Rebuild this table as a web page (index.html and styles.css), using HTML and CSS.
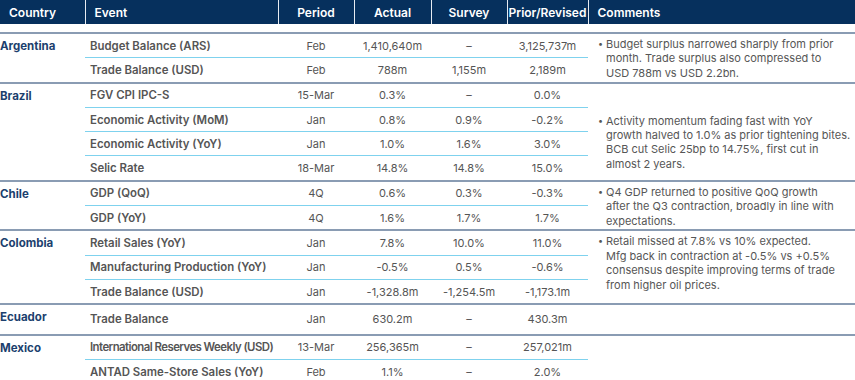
FILE: index.html
```html
<!DOCTYPE html>
<html lang="en">
<head>
<meta charset="utf-8">
<title>LatAm Economic Calendar</title>
<link rel="stylesheet" href="styles.css">
</head>
<body>
<table class="cal">
  <colgroup>
    <col class="c-country">
    <col class="c-event">
    <col class="c-period">
    <col class="c-actual">
    <col class="c-survey">
    <col class="c-prior">
    <col class="c-comments">
  </colgroup>
  <thead>
    <tr>
      <th class="left">Country</th>
      <th class="left">Event</th>
      <th>Period</th>
      <th>Actual</th>
      <th>Survey</th>
      <th>Prior/Revised</th>
      <th class="left">Comments</th>
    </tr>
  </thead>
  <tbody class="spacer"><tr><td colspan="7"></td></tr></tbody>
  <tbody class="grp">
    <tr>
      <td class="country" rowspan="2">Argentina</td>
      <td class="ev">Budget Balance (ARS)</td><td class="num">Feb</td><td class="num">1,410,640m</td><td class="num">–</td><td class="num">3,125,737m</td>
      <td class="cm" rowspan="2"><div class="note"><span class="dot">•</span><span class="txt">Budget surplus narrowed sharply from prior<br>month. Trade surplus also compressed to<br>USD 788m vs USD 2.2bn.</span></div></td>
    </tr>
    <tr>
      <td class="ev">Trade Balance (USD)</td><td class="num">Feb</td><td class="num">788m</td><td class="num">1,155m</td><td class="num">2,189m</td>
    </tr>
  </tbody>
  <tbody class="grp">
    <tr>
      <td class="country" rowspan="4">Brazil</td>
      <td class="ev">FGV CPI IPC-S</td><td class="num">15-Mar</td><td class="num">0.3%</td><td class="num">–</td><td class="num">0.0%</td>
      <td class="cm cm-brazil" rowspan="4"><div class="note"><span class="dot">•</span><span class="txt">Activity momentum fading fast with YoY<br>growth halved to 1.0% as prior tightening bites.<br>BCB cut Selic 25bp to 14.75%, first cut in<br>almost 2 years.</span></div></td>
    </tr>
    <tr>
      <td class="ev">Economic Activity (MoM)</td><td class="num">Jan</td><td class="num">0.8%</td><td class="num">0.9%</td><td class="num">-0.2%</td>
    </tr>
    <tr>
      <td class="ev">Economic Activity (YoY)</td><td class="num">Jan</td><td class="num">1.0%</td><td class="num">1.6%</td><td class="num">3.0%</td>
    </tr>
    <tr>
      <td class="ev">Selic Rate</td><td class="num">18-Mar</td><td class="num">14.8%</td><td class="num">14.8%</td><td class="num">15.0%</td>
    </tr>
  </tbody>
  <tbody class="grp">
    <tr>
      <td class="country" rowspan="2">Chile</td>
      <td class="ev">GDP (QoQ)</td><td class="num">4Q</td><td class="num">0.6%</td><td class="num">0.3%</td><td class="num">-0.3%</td>
      <td class="cm" rowspan="2"><div class="note"><span class="dot">•</span><span class="txt">Q4 GDP returned to positive QoQ growth<br>after the Q3 contraction, broadly in line with<br>expectations.</span></div></td>
    </tr>
    <tr>
      <td class="ev">GDP (YoY)</td><td class="num">4Q</td><td class="num">1.6%</td><td class="num">1.7%</td><td class="num">1.7%</td>
    </tr>
  </tbody>
  <tbody class="grp">
    <tr>
      <td class="country" rowspan="3">Colombia</td>
      <td class="ev">Retail Sales (YoY)</td><td class="num">Jan</td><td class="num">7.8%</td><td class="num">10.0%</td><td class="num">11.0%</td>
      <td class="cm" rowspan="3"><div class="note"><span class="dot">•</span><span class="txt">Retail missed at 7.8% vs 10% expected.<br>Mfg back in contraction at -0.5% vs +0.5%<br>consensus despite improving terms of trade<br>from higher oil prices.</span></div></td>
    </tr>
    <tr>
      <td class="ev">Manufacturing Production (YoY)</td><td class="num">Jan</td><td class="num">-0.5%</td><td class="num">0.5%</td><td class="num">-0.6%</td>
    </tr>
    <tr>
      <td class="ev">Trade Balance (USD)</td><td class="num">Jan</td><td class="num">-1,328.8m</td><td class="num">-1,254.5m</td><td class="num">-1,173.1m</td>
    </tr>
  </tbody>
  <tbody class="grp">
    <tr>
      <td class="country">Ecuador</td>
      <td class="ev">Trade Balance</td><td class="num">Jan</td><td class="num">630.2m</td><td class="num">–</td><td class="num">430.3m</td>
      <td class="cm"></td>
    </tr>
  </tbody>
  <tbody class="grp">
    <tr>
      <td class="country" rowspan="2">Mexico</td>
      <td class="ev ev-tight">International Reserves Weekly (USD)</td><td class="num">13-Mar</td><td class="num">256,365m</td><td class="num">–</td><td class="num">257,021m</td>
      <td class="cm" rowspan="2"></td>
    </tr>
    <tr>
      <td class="ev">ANTAD Same-Store Sales (YoY)</td><td class="num">Feb</td><td class="num">1.1%</td><td class="num">–</td><td class="num">2.0%</td>
    </tr>
  </tbody>
</table>
</body>
</html>
```

FILE: styles.css
```css
html, body {
  margin: 0;
  padding: 0;
  background: #ffffff;
}

body {
  font-family: Inter, "Liberation Sans", sans-serif;
  color: #555555;
}

.cal {
  width: 855px;
  table-layout: fixed;
  border-collapse: collapse;
  border-spacing: 0;
  border-bottom: 2px solid #2f4b70;
}

.c-country { width: 85px; }
.c-event { width: 193px; }
.c-period { width: 76px; }
.c-actual { width: 77px; }
.c-survey { width: 76px; }
.c-prior { width: 81px; }
.c-comments { width: 267px; }

.cal th {
  height: 24px;
  padding: 0;
  background: #06305d;
  color: #ffffff;
  font-size: 12px;
  font-weight: 600;
  text-align: center;
  white-space: nowrap;
  border-left: 1px solid #e6ebf2;
}

.cal th:first-child {
  border-left: none;
}

.cal th.left {
  text-align: left;
  padding-left: 9px;
}

.spacer td {
  height: 8px;
  padding: 0;
}

.cal td {
  padding: 0;
  font-size: 11px;
  white-space: nowrap;
}

.grp tr td {
  height: 23.3px;
  line-height: 14px;
  vertical-align: middle;
}

.grp tr:first-child td {
  border-top: 2px solid #8a9cb3;
}

.grp tr:not(:last-child) .ev,
.grp tr:not(:last-child) .num {
  border-bottom: 1px solid #7fd2ee;
}

.country {
  vertical-align: top !important;
  padding-top: 5px !important;
  color: #1c3f6e;
  font-weight: 700;
  font-size: 11.5px !important;
}

.ev {
  padding-left: 5px !important;
  font-weight: 600;
  font-size: 11.4px !important;
  color: #555555;
}

.ev-tight {
  letter-spacing: -0.55px;
}

.num {
  text-align: center;
  color: #555555;
}

.cm {
  vertical-align: top !important;
  padding: 3px 4px 0 10px !important;
}

.cm-brazil {
  padding-top: 30px !important;
}

.note {
  display: flex;
  line-height: 14.4px;
  color: #565656;
}

.dot {
  width: 8px;
  flex: none;
  font-size: 9px;
}

.txt {
  white-space: nowrap;
}
```
